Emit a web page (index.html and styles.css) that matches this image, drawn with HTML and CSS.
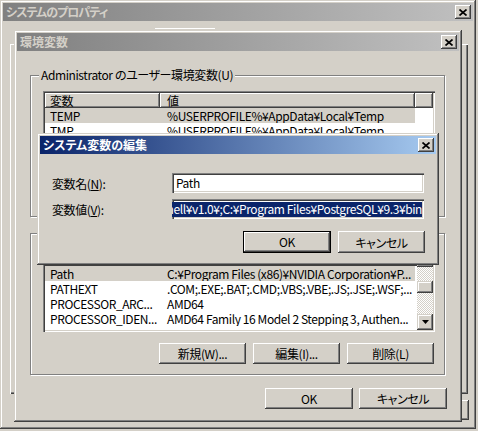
FILE: index.html
```html
<!DOCTYPE html>
<html lang="ja">
<head>
  <meta charset="UTF-8">
  <title>システムのプロパティ</title>
  <link rel="stylesheet" href="styles.css">
</head>
<body>
  <div class="desktop">

    <!-- back window: system properties -->
    <div class="win props">
      <div class="titlebar inactive">
        <span class="title">システムのプロパティ</span>
        <span class="close"><svg width="8" height="7" viewBox="0 0 8 7"><path d="M0.5 0.5 L7.5 6.5 M7.5 0.5 L0.5 6.5" stroke="#000" stroke-width="1.7"/></svg></span>
      </div>
    </div>
    <div class="tab-edge"></div>
    <div class="sheet"></div>
    <div class="peek-btn"></div>

    <!-- environment variables window -->
    <div class="win envvars">
      <div class="titlebar inactive">
        <span class="title">環境変数</span>
        <span class="close"><svg width="8" height="7" viewBox="0 0 8 7"><path d="M0.5 0.5 L7.5 6.5 M7.5 0.5 L0.5 6.5" stroke="#000" stroke-width="1.7"/></svg></span>
      </div>
      <div class="env-body">
        <div class="group">
          <span class="group-label">Administrator のユーザー環境変数(U)</span>
          <div class="list">
            <div class="list-main">
              <div class="list-head">
                <div class="hcell c1">変数</div>
                <div class="hcell c2">値</div>
                <div class="hcell fill"></div>
              </div>
              <div class="row selected"><span class="cell c1">TEMP</span><span class="cell c2">%USERPROFILE%¥AppData¥Local¥Temp</span></div>
              <div class="row"><span class="cell c1">TMP</span><span class="cell c2">%USERPROFILE%¥AppData¥Local¥Temp</span></div>
            </div>
          </div>
        </div>

        <!-- label and header of this group sit under the edit dialog -->
        <div class="group">
          <div class="list">
            <div class="list-main">
              <div class="list-head">
                <div class="hcell c1"></div>
                <div class="hcell c2"></div>
                <div class="hcell fill"></div>
              </div>
              <div class="row selected"><span class="cell c1">Path</span><span class="cell c2">C:¥Program Files (x86)¥NVIDIA Corporation¥P...</span></div>
              <div class="row"><span class="cell c1">PATHEXT</span><span class="cell c2">.COM;.EXE;.BAT;.CMD;.VBS;.VBE;.JS;.JSE;.WSF;...</span></div>
              <div class="row"><span class="cell c1">PROCESSOR_ARC...</span><span class="cell c2">AMD64</span></div>
              <div class="row"><span class="cell c1">PROCESSOR_IDEN...</span><span class="cell c2">AMD64 Family 16 Model 2 Stepping 3, Authen...</span></div>
            </div>
            <div class="vscroll">
              <span class="sb-btn"><svg width="7" height="4" viewBox="0 0 7 4"><polygon points="3.5,0 7,4 0,4" fill="#000"/></svg></span>
              <span class="sb-track"><span class="sb-thumb"></span></span>
              <span class="sb-btn"><svg width="7" height="4" viewBox="0 0 7 4"><polygon points="0,0 7,0 3.5,4" fill="#000"/></svg></span>
            </div>
          </div>
          <div class="btn-row">
            <button class="btn">新規(W)...</button>
            <button class="btn">編集(I)...</button>
            <button class="btn">削除(L)</button>
          </div>
        </div>

        <div class="dlg-buttons">
          <button class="btn wide">OK</button>
          <button class="btn wide">キャンセル</button>
        </div>
      </div>
    </div>

    <!-- active dialog: edit system variable -->
    <div class="win editdlg">
      <div class="titlebar active">
        <span class="title">システム変数の編集</span>
        <span class="close"><svg width="8" height="7" viewBox="0 0 8 7"><path d="M0.5 0.5 L7.5 6.5 M7.5 0.5 L0.5 6.5" stroke="#000" stroke-width="1.7"/></svg></span>
      </div>
      <div class="edit-body">
        <div class="field-row">
          <label class="field-label" for="varName">変数名(<u>N</u>):</label>
          <div class="field" id="varName">Path</div>
        </div>
        <div class="field-row">
          <label class="field-label" for="varValue">変数値(<u>V</u>):</label>
          <div class="field sel" id="varValue"><span class="sel-text">hell¥v1.0¥;C:¥Program Files¥PostgreSQL¥9.3¥bin</span></div>
        </div>
        <div class="edit-buttons">
          <button class="btn default">OK</button>
          <button class="btn">キャンセル</button>
        </div>
      </div>
    </div>

  </div>
</body>
</html>
```

FILE: styles.css
```css
body {
  margin: 0;
  background: #d4d0c8;
  font-family: "Noto Sans CJK JP", "Liberation Sans", sans-serif;
  font-size: 12px;
  font-feature-settings: "palt";
  letter-spacing: -0.4px;
  color: #000;
}
.desktop {
  position: relative;
  width: 478px;
  height: 431px;
  overflow: hidden;
}

/* classic window frame */
.win {
  position: absolute;
  box-sizing: border-box;
  padding: 3px;
  background: #d4d0c8;
  box-shadow: inset -1px -1px #404040, inset 1px 1px #d4d0c8, inset -2px -2px #808080, inset 2px 2px #fff;
  display: flex;
  flex-direction: column;
}
.props { left: 0; top: 0; width: 476px; height: 429px; }
.envvars { left: 14px; top: 30px; width: 448px; height: 392px; }
.editdlg { left: 37px; top: 133px; width: 402px; height: 132px; }

.titlebar {
  flex-shrink: 0;
  height: 18px;
  display: flex;
  align-items: center;
  justify-content: space-between;
  padding: 0 2px 0 3px;
}
.titlebar.inactive {
  background: linear-gradient(to right, #808080, #c0c0c0);
  color: #d4d0c8;
}
.titlebar.active {
  background: linear-gradient(to right, #0a246a, #a6caf0);
  color: #fff;
}
.title {
  font-weight: bold;
  line-height: 18px;
  letter-spacing: 0;
}
.props .title {
  letter-spacing: -1px;
}
.close {
  width: 16px;
  height: 14px;
  box-sizing: border-box;
  background: #d4d0c8;
  box-shadow: inset -1px -1px #404040, inset 1px 1px #fff, inset -2px -2px #808080;
  display: flex;
  align-items: center;
  justify-content: center;
}

/* bits of the property sheet peeking out behind */
.tab-edge {
  position: absolute;
  left: 155px;
  top: 28px;
  width: 60px;
  height: 2px;
  border-top: 1px solid #fff;
}
.sheet {
  position: absolute;
  left: 10px;
  top: 44px;
  width: 458px;
  height: 350px;
  box-shadow: inset 1px 1px #fff, inset -1px -1px #404040, inset -2px -2px #808080;
}
.peek-btn {
  position: absolute;
  left: 400px;
  top: 400px;
  width: 69px;
  height: 20px;
  box-shadow: inset -1px -1px #404040, inset 1px 1px #fff, inset -2px -2px #808080;
}

/* environment variables */
.env-body {
  flex: 1;
  padding: 24px 14px 0 13px;
  display: flex;
  flex-direction: column;
}
.group {
  position: relative;
  height: 142px;
  box-sizing: border-box;
  border: 1px solid #808080;
  box-shadow: 1px 1px #fff, inset 1px 1px #fff;
  padding: 15px 9px 0 12px;
}
.group + .group {
  margin-top: 16px;
}
.group-label {
  position: absolute;
  left: 8px;
  top: -8px;
  padding: 0 2px;
  line-height: 14px;
  background: #d4d0c8;
  white-space: nowrap;
}

.list {
  height: 83px;
  box-sizing: border-box;
  padding: 2px;
  background: #fff;
  box-shadow: inset 1px 1px #808080, inset 2px 2px #404040, inset -1px -1px #fff, inset -2px -2px #d4d0c8;
  display: flex;
  overflow: hidden;
}
.list-main {
  flex: 1;
  overflow: hidden;
}
.list-head {
  display: flex;
  height: 15px;
}
.hcell {
  box-sizing: border-box;
  height: 15px;
  line-height: 15px;
  padding-left: 5px;
  background: #d4d0c8;
  box-shadow: inset -1px -1px #404040, inset 1px 1px #fff, inset -2px -2px #808080;
}
.c1 { width: 115px; flex-shrink: 0; }
.c2 { width: 255px; flex-shrink: 0; }
.hcell.c2, .cell.c2 { padding-left: 7px; }
.fill { flex: 1; }
.row {
  display: flex;
  height: 15px;
  line-height: 15px;
  white-space: nowrap;
}
.cell {
  box-sizing: border-box;
  padding-left: 5px;
  overflow: hidden;
}
.row.selected .cell {
  background: #d4d0c8;
}

.vscroll {
  width: 16px;
  flex-shrink: 0;
  display: flex;
  flex-direction: column;
}
.sb-btn {
  height: 16px;
  flex-shrink: 0;
  box-sizing: border-box;
  background: #d4d0c8;
  box-shadow: inset -1px -1px #404040, inset 1px 1px #d4d0c8, inset -2px -2px #808080, inset 2px 2px #fff;
  display: flex;
  align-items: center;
  justify-content: center;
}
.sb-track {
  flex: 1;
  padding-top: 14px;
  background-image: repeating-conic-gradient(#fff 0% 25%, #d4d0c8 0% 50%);
  background-size: 2px 2px;
}
.sb-thumb {
  display: block;
  height: 12px;
  background: #d4d0c8;
  box-shadow: inset -1px -1px #404040, inset 1px 1px #d4d0c8, inset -2px -2px #808080, inset 2px 2px #fff;
}

.btn {
  width: 87px;
  height: 21px;
  box-sizing: border-box;
  border: none;
  padding: 0;
  font: inherit;
  letter-spacing: inherit;
  line-height: 19px;
  color: #000;
  background: #d4d0c8;
  box-shadow: inset -1px -1px #404040, inset 1px 1px #fff, inset -2px -2px #808080;
}
.btn-row {
  display: flex;
  justify-content: flex-end;
  gap: 7px;
  margin-top: 11px;
  margin-right: 1px;
}
.dlg-buttons {
  display: flex;
  justify-content: flex-end;
  gap: 6px;
  margin-top: 13px;
  margin-right: -2px;
}
.btn.wide { width: 88px; }

/* edit dialog */
.edit-body {
  padding: 19px 12px 0 12px;
}
.field-row {
  display: flex;
  align-items: center;
  height: 20px;
}
.field-row + .field-row {
  margin-top: 6px;
}
.field-label {
  width: 120px;
  flex-shrink: 0;
}
.field {
  width: 252px;
  height: 20px;
  box-sizing: border-box;
  padding: 2px 4px;
  line-height: 16px;
  background: #fff;
  box-shadow: inset 1px 1px #808080, inset 2px 2px #404040, inset -1px -1px #fff, inset -2px -2px #d4d0c8;
  white-space: nowrap;
  overflow: hidden;
}
.field.sel {
  display: flex;
  justify-content: flex-end;
  padding: 3px 2px 2px 3px;
}
.sel-text {
  flex: 1 0 auto;
  text-align: right;
  background: #0a246a;
  color: #fff;
  line-height: 14px;
}
.edit-buttons {
  display: flex;
  justify-content: flex-end;
  gap: 7px;
  margin-top: 12px;
  margin-right: -1px;
}
.edit-buttons .btn {
  height: 22px;
}
.btn.default {
  width: 88px;
  border: 1px solid #000;
  line-height: 18px;
}
```
